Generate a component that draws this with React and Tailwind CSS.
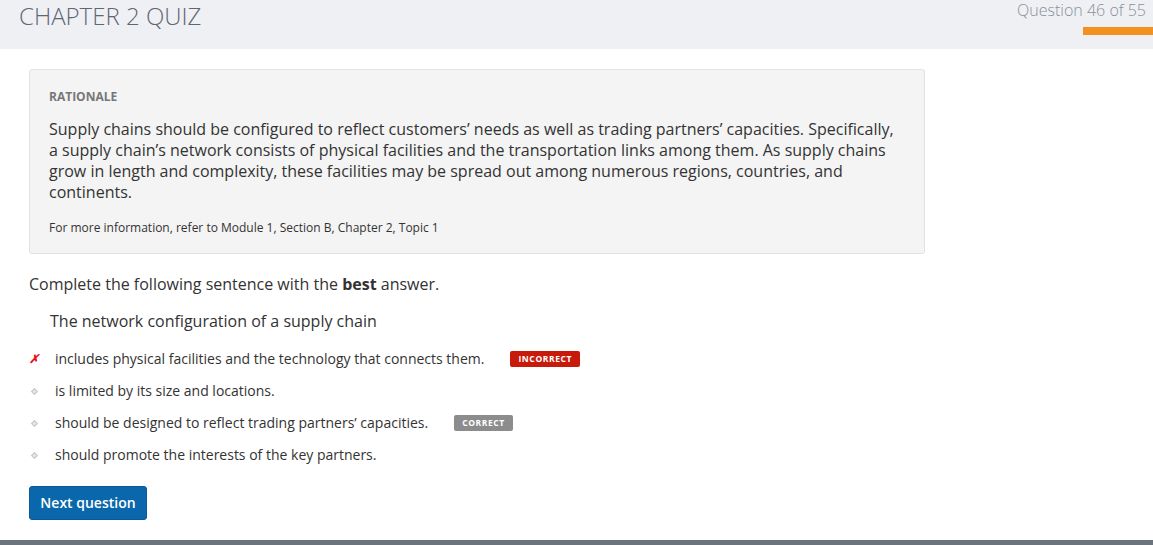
export default function App() {
  const options = [
    {
      text: "includes physical facilities and the technology that connects them.",
      mark: "x",
      badge: "incorrect",
    },
    { text: "is limited by its size and locations.", mark: "dot" },
    {
      text: "should be designed to reflect trading partners\u2019 capacities.",
      mark: "dot",
      badge: "correct",
    },
    { text: "should promote the interests of the key partners.", mark: "dot" },
  ];

  return (
    <div
      className="relative w-[1153px] h-[545px] bg-white overflow-hidden text-[#333]"
      style={{ fontFamily: '"Open Sans", "Liberation Sans", sans-serif' }}
    >
      <header className="h-[49px] bg-[#eff0f4] flex justify-between">
        <h1 className="pl-[19px] text-[24px] leading-[32px] font-light text-[#5f6673]">
          CHAPTER 2 QUIZ
        </h1>
        <div className="flex flex-col items-end">
          <div className="pr-[7px] text-[16px] leading-[20px] font-light text-[#8a8f99]">
            Question 46 of 55
          </div>
          <div className="mt-[7px] w-[70px] h-[8px] bg-[#f4901e]" />
        </div>
      </header>

      <main className="pl-[29px] pt-[20px]">
        <section className="w-[896px] bg-[#f4f4f4] border border-[#e2e2e2] rounded-[3px] px-[19px] pt-[19px] pb-[17px]">
          <h2 className="text-[12px] leading-[16px] font-bold text-[#777] uppercase">
            Rationale
          </h2>
          <p className="mt-[14px] text-[16px] leading-[21px] text-[#333]">
            Supply chains should be configured to reflect customers&rsquo; needs as well as
            trading partners&rsquo; capacities. Specifically, a supply chain&rsquo;s network
            consists of physical facilities and the transportation links among them. As supply
            chains grow in length and complexity, these facilities may be spread out among
            numerous regions, countries, and continents.
          </p>
          <p className="mt-[17px] text-[12px] leading-[16px] text-[#333]">
            For more information, refer to Module 1, Section B, Chapter 2, Topic 1
          </p>
        </section>

        <p className="mt-[19px] text-[16px] leading-[22px]">
          Complete the following sentence with the <strong className="font-bold">best</strong>{" "}
          answer.
        </p>
        <p className="mt-[15px] pl-[21px] text-[16px] leading-[22px]">
          The network configuration of a supply chain
        </p>

        <ul className="mt-[17px] -ml-[3px] flex flex-col gap-[12px]">
          {options.map((o, i) => (
            <li key={i} className="flex items-center h-[20px] text-[14px] leading-[20px]">
              <span className="w-[16px] mr-[13px] flex justify-center">
                {o.mark === "x" ? (
                  <span className="text-[#e8101a] font-bold italic text-[12px] leading-none">
                    ✗
                  </span>
                ) : (
                  <span className="w-[5px] h-[5px] rotate-45 border border-[#c4c4c4] bg-[#e8e8e8]" />
                )}
              </span>
              <span>{o.text}</span>
              {o.badge === "incorrect" && (
                <span className="ml-[26px] h-[16px] px-[8px] rounded-[2px] bg-[#c81a0a] text-white text-[8.5px] leading-[16px] font-bold tracking-[0.6px]">
                  INCORRECT
                </span>
              )}
              {o.badge === "correct" && (
                <span className="ml-[26px] h-[16px] px-[8px] rounded-[2px] bg-[#8c8c8c] text-white text-[8.5px] leading-[16px] font-bold tracking-[0.6px]">
                  CORRECT
                </span>
              )}
            </li>
          ))}
        </ul>

        <button className="mt-[21px] w-[118px] h-[34px] rounded-[3px] bg-[#0a67ab] border border-[#075a97] text-white text-[14px] leading-[30px] font-semibold">
          Next question
        </button>
      </main>

      <div className="absolute left-0 right-0 bottom-0 h-[5px] bg-[#6b747c]" />
    </div>
  );
}
